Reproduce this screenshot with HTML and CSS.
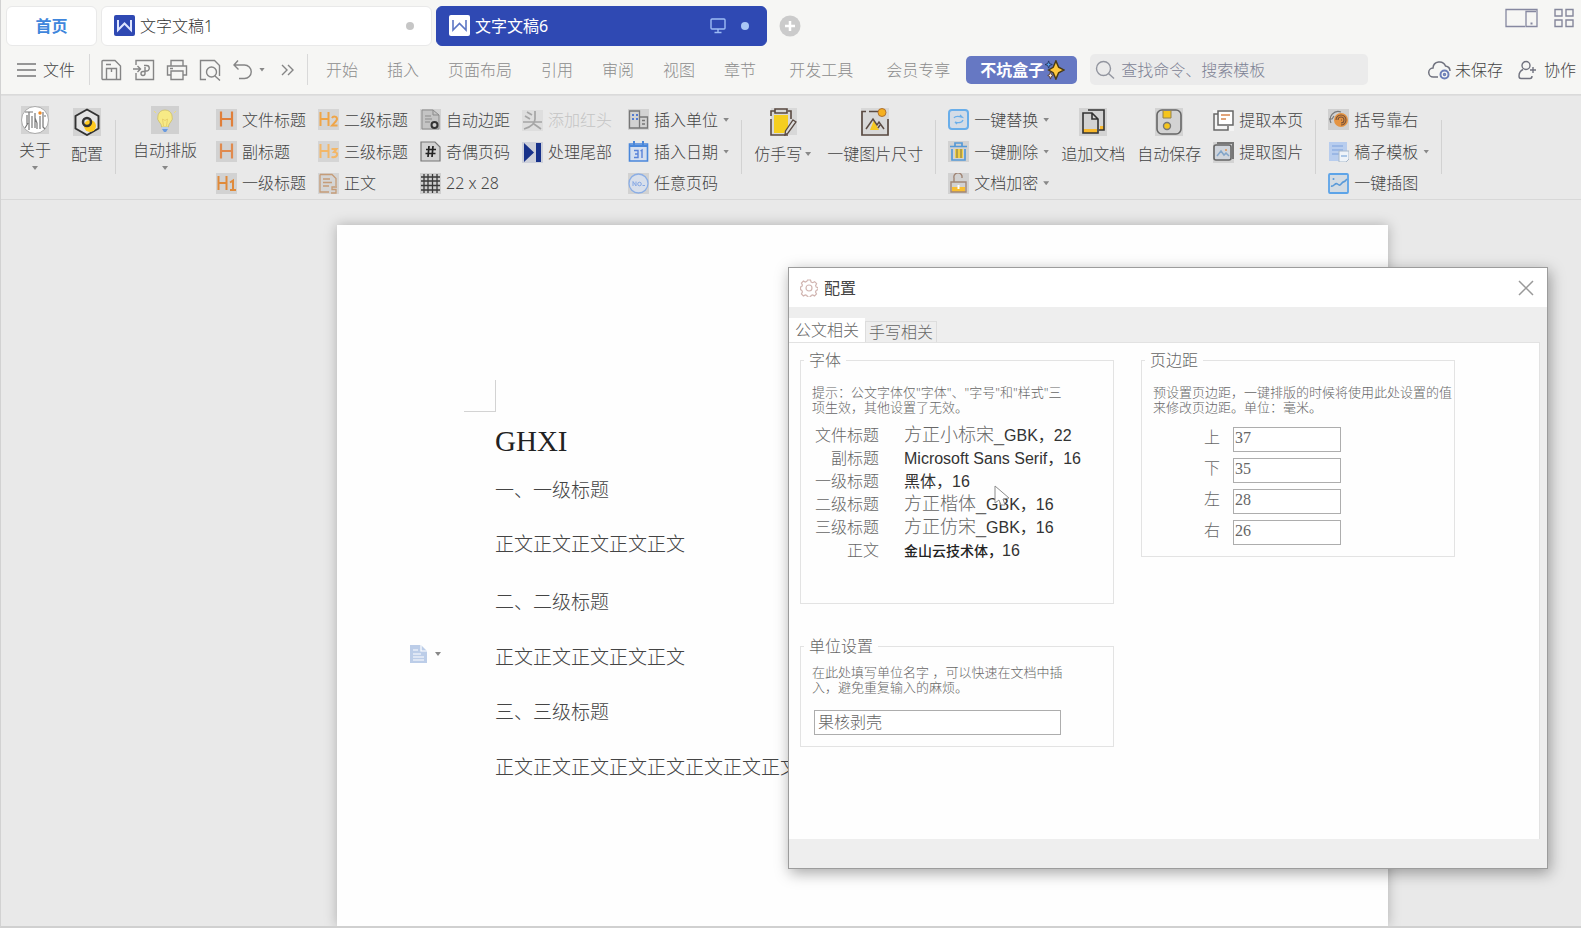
FILE: index.html
```html
<!DOCTYPE html>
<html lang="zh-CN">
<head>
<meta charset="utf-8">
<title>文字文稿6</title>
<link rel="stylesheet" href="styles.css">
</head>
<body>
<div class="app">
  <nav class="tabs" aria-label="文档标签">
    <button class="tab tab-home">首页</button>
    <button class="tab tab-doc">
      <svg class="doc-logo" viewBox="0 0 21 21"><rect width="21" height="21" rx="2" fill="#2f49b3"/><path d="M4 5v10l6.500-6.500L17 15V5" fill="none" stroke="#dfe6ff" stroke-width="2"/></svg>
      <span class="tab-name">文字文稿1</span>
      <span class="dot"></span>
    </button>
    <button class="tab tab-doc tab-active">
      <svg class="doc-logo" viewBox="0 0 21 21"><rect width="21" height="21" rx="2" fill="#fff"/><path d="M4 5v10l6.500-6.500L17 15V5" fill="none" stroke="#5c76c4" stroke-width="1.600"/></svg>
      <span class="tab-name">文字文稿6</span>
      <svg class="monitor" viewBox="0 0 16 16" fill="none" stroke="#9dbcf5" stroke-width="1.400"><rect x="1" y="1" width="14" height="10" rx="1"/><path d="M8 11v3M4.500 14.500h7"/></svg>
      <span class="dot"></span>
    </button>
    <button class="tab-add" aria-label="新建"><svg viewBox="0 0 22 22"><circle cx="11" cy="11" r="10.500" fill="#cbcbcb"/><path d="M11 6v10M6 11h10" stroke="#fff" stroke-width="2.500"/></svg></button>
    <div class="window-tools">
      <svg width="33" height="20" viewBox="0 0 33 20" fill="none" stroke="#8688a0" stroke-width="1.300"><path d="M20 18.500H1V1.500h31v17H21v-15h10"/><path d="M25.500 15.500h2" stroke-width="2"/></svg>
      <svg width="20" height="20" viewBox="0 0 20 20" fill="none" stroke="#85879b" stroke-width="1.400"><path d="M1 1.500h7v6.500H1zM12 1.500h7v6.500h-7zM1 12h7v6.500H1zM12 12h7v6.500h-7z"/></svg>
    </div>
  </nav>

  <div class="menubar">
    <button class="file-btn"><svg width="20" height="16" viewBox="0 0 20 16" stroke="#777" stroke-width="1.400"><path d="M0 2h19M0 8h19M0 14h19"/></svg>文件</button>
    <span class="rule"></span>
    <div class="quick">
      <button aria-label="保存"><svg viewBox="0 0 22 22"><path d="M3 1.500h12l5.500 5.500v13.500h-17.500a1 1 0 0 1-1-1v-17a1 1 0 0 1 1-1z"/><path d="M6.500 20.500V9.500h10v11M6 5.500h5M11.500 9.500V13"/></svg></button>
      <button aria-label="输出为PDF"><svg viewBox="0 0 22 22"><path d="M3 6V1.500h17.500v19H3V14M0 10h7M4.500 7l3 3-3 3"/><path d="M11 6.500h2.500a2.700 2.700 0 0 1 0 5.500H12v2.500a2 2 0 1 1-2-2h2V8"/></svg></button>
      <button aria-label="打印"><svg viewBox="0 0 22 22"><path d="M5 7V1.500h12V7M5 16H1.500V7h19v9H17"/><path d="M5 12h12v8.500H5zM4 9.500h3"/></svg></button>
      <button aria-label="打印预览"><svg viewBox="0 0 22 22"><path d="M7 20.500H1.500v-19h14l5 5V17"/><circle cx="12.500" cy="13" r="5"/><path d="M16 17l5 4.500"/></svg></button>
      <button aria-label="撤销"><svg viewBox="0 0 22 22"><path d="M6 1.500L2 6l4.500 4.500M2 6h10.500a6.500 6.500 0 0 1 0 13.500H7"/></svg></button>
      <span class="caret"></span>
      <button class="more" aria-label="更多"><svg viewBox="0 0 22 22"><path d="M6 6l5 5-5 5M12 6l5 5-5 5"/></svg></button>
    </div>
    <span class="rule"></span>
    <div class="menus">
      <button>开始</button><button>插入</button><button>页面布局</button><button>引用</button><button>审阅</button><button>视图</button><button>章节</button><button class="wide">开发工具</button><button class="wide">会员专享</button>
    </div>
    <button class="pill">不坑盒子<svg width="20" height="20" viewBox="0 0 22 22"><path d="M12 1l3 7 6 3-6 3-3 7-3-7-5-3 5-3z" fill="#ffc83d" stroke="#4a3b17" stroke-width="1.600"/><path d="M4 1l1 3 3 1-3 1-1 3-1-3-3-1 3-1z" fill="#5aa3f0" stroke="#24365e"/><path d="M6 13l1 3 2 1-2 1-1 3-1-3-2-1 2-1z" fill="#fff3e0" stroke="#5b3a2b"/></svg></button>
    <label class="search"><svg width="20" height="20" viewBox="0 0 20 20" fill="none" stroke="#92959f" stroke-width="1.400"><circle cx="8.500" cy="8.500" r="7"/><path d="M13.500 13.500l5.500 5"/></svg><input type="text" placeholder="查找命令、搜索模板" aria-label="查找命令"></label>
    <div class="account">
      <button><svg width="23" height="20" viewBox="0 0 23 20" fill="none" stroke="#70727e" stroke-width="1.500"><path d="M10 17H5.500a4.500 4.500 0 0 1-.5-9A6.500 6.500 0 0 1 17.500 6c3 .5 4.500 2.500 4.500 5"/><circle cx="16.500" cy="14.500" r="4" stroke="#6c7eb8" stroke-width="2"/><circle cx="16.500" cy="14.500" r="1" stroke="#6c7eb8"/></svg>未保存</button>
      <button><svg width="19" height="20" viewBox="0 0 19 20" fill="none" stroke="#70727e" stroke-width="1.400"><circle cx="8" cy="5.500" r="4"/><path d="M5 9.500c-3 1.500-4 4-4 6.500 0 1.500.5 2.500 2 2.500h9c1.500 0 2-1 2-2.500M12 10h6M15 7v6"/></svg>协作</button>
    </div>
  </div>

  <div class="ribbon">
    <button class="big high">
      <svg viewBox="0 0 28 28"><rect width="28" height="28" fill="#d3d3d3"/><circle cx="14" cy="14" r="13.500" fill="#fff" stroke="#999" stroke-width=".8"/><path d="M4 6h8M8 6v18M6 9v10M11 10v12M4 22l3-5M14 7v15M14 12l2 5v6M19 10v13M22 6v15l2 2M23 10h2" fill="none" stroke="#777" stroke-width="1.200"/><circle cx="19" cy="7" r="1.700" fill="#f08a24"/></svg>
      <span>关于</span><i class="caret"></i>
    </button>
    <button class="big apart">
      <svg viewBox="0 0 28 28"><rect width="28" height="28" fill="#d3d3d3"/><path d="M14 1.500L25.500 8v12.500L14 27 2.500 20.500V8z" fill="#e4e4e4" stroke="#333" stroke-width="1.900"/><circle cx="17" cy="18" r="6" fill="#ffca1f"/><circle cx="14" cy="14" r="4" fill="none" stroke="#333" stroke-width="2.500"/></svg>
      <span>配置</span>
    </button>
    <span class="divider"></span>
    <button class="big high shift">
      <svg viewBox="0 0 28 28"><rect width="28" height="28" fill="#d0d0d0"/><path d="M14 4a7.500 7.500 0 0 0-5 13c1 1 1.500 2.500 1.500 4h7c0-1.500.5-3 1.500-4a7.500 7.500 0 0 0-5-13z" fill="#f7ea86" stroke="#c5b765" stroke-width=".7"/><path d="M12.500 20l-1-7 2.500 1.500 2.500-1.500-1 7" fill="none" stroke="#e3c964" stroke-width=".8"/><path d="M11 21h6v2h-6z" fill="#b9cde9"/><path d="M11 23h6l-2 3h-2z" fill="#6a9be0"/><path d="M3 5l2 2M25 5l-2 2" stroke="#eedc7a"/></svg>
      <span>自动排版</span><i class="caret"></i>
    </button>
    <div class="stack after-layout">
      <button><svg viewBox="0 0 21 21"><rect width="21" height="21" fill="#d2d2d2"/><path d="M5 2.500v15M16 2.500v15M5 10h11" stroke="#e07f3a" stroke-width="2.200"/></svg>文件标题</button>
      <button><svg viewBox="0 0 21 21"><rect width="21" height="21" fill="#d2d2d2"/><path d="M5 2.500v15M16 2.500v15M5 10h11" stroke="#e08a4e" stroke-width="2.200"/></svg>副标题</button>
      <button><svg viewBox="0 0 21 21"><rect width="21" height="21" fill="#d2d2d2"/><path d="M2.500 3v14M10.500 3v14M2.500 10h8M14 9.500l3-2V17M14 17h6" fill="none" stroke="#e08a3a" stroke-width="2"/></svg>一级标题</button>
    </div>
    <div class="stack">
      <button><svg viewBox="0 0 21 21"><rect width="21" height="21" fill="#d5d5d5"/><path d="M2.500 3v14M10.500 3v14M2.500 10h8M14 9c1-2 5-2 5 1 0 2-3 4-5 6.500h5.500" fill="none" stroke="#efa548" stroke-width="2"/></svg>二级标题</button>
      <button><svg viewBox="0 0 21 21"><rect width="21" height="21" fill="#d5d5d5"/><path d="M2.500 3v14M10.500 3v14M2.500 10h8M13.500 8h5L16 11c5 0 4 6-2.500 5" fill="none" stroke="#f3b768" stroke-width="2"/></svg>三级标题</button>
      <button><svg viewBox="0 0 21 21"><rect width="21" height="21" fill="#d5d5d5"/><path d="M2 1.500h12l4 4V13M2 1.500v17.500h9M5 6h7M5 9.500h9M5 13h6M19 14h-5v2.500h4V20h-5" fill="none" stroke="#c59c78" stroke-width="1.300"/></svg>正文</button>
    </div>
    <div class="stack">
      <button><svg viewBox="0 0 21 21"><rect width="21" height="21" fill="#d2d2d2"/><path d="M2 1h11l6 5v14H2z" fill="#c4c4c4" stroke="#8b8b8b"/><path d="M13 1v5h6M5 7h6M5 10h7M5 13h5" fill="none" stroke="#8b8b8b"/><circle cx="14.500" cy="16" r="3" fill="#ccc" stroke="#333" stroke-width="2"/></svg>自动边距</button>
      <button><svg viewBox="0 0 21 21"><path d="M1 1h14l5 5v14H1z" fill="#d2d2d2" stroke="#777" stroke-width="1.200"/><path d="M9 5L8 16M13 5l-1 11M6 8.500h10M5.500 12.500h10" stroke="#222" stroke-width="1.700"/></svg>奇偶页码</button>
      <button><svg viewBox="0 0 21 21"><rect width="21" height="21" fill="#cfcfcf"/><path d="M4 1v19M8 1v19M12.500 1v19M17 1v19M1 4h19M1 8h19M1 12.500h19M1 17h19" stroke="#3a3a3a" stroke-width="1.300"/></svg>22 x 28</button>
    </div>
    <div class="stack">
      <button class="disabled" disabled><svg viewBox="0 0 21 21"><rect width="21" height="21" fill="#dedede"/><path d="M5 2l5 3M3 6l5 3M1 12h19M13 1v8c0 5-4 8-11 10M12 14l7 5" fill="none" stroke="#a5a5a5" stroke-width="1.700"/></svg>添加红头</button>
      <button><svg viewBox="0 0 21 21"><rect width="21" height="21" fill="#cdd0da"/><path d="M2 1l10 9.500L2 20zM14 1h5v19h-5z" fill="#17318a"/></svg>处理尾部</button>
    </div>
    <div class="stack insert">
      <button><svg viewBox="0 0 21 21"><rect width="21" height="21" fill="#d2d2d2"/><path d="M1.500 2h10v17h-10zM11.500 8h8v11h-8zM14 11.500h3M14 15h3" fill="none" stroke="#777" stroke-width="1.300"/><path d="M4 6h2M8 6h2M4 10h2M8 10h2" stroke="#537bd0" stroke-width="2"/></svg>插入单位<i class="caret"></i></button>
      <button><svg viewBox="0 0 21 21"><path d="M1.500 3h18v17h-18z" fill="#d5dff0" stroke="#4a87da" stroke-width="1.600"/><path d="M1.500 5h18M6 0v5M15 0v5" stroke="#4a87da" stroke-width="2"/><path d="M6 9.500h4v7H6M7 13h3M12.500 10l1.500-1V17" fill="none" stroke="#5a83d8" stroke-width="1.400"/></svg>插入日期<i class="caret"></i></button>
      <button><svg viewBox="0 0 21 21"><rect width="21" height="21" fill="#d2d2d2"/><circle cx="10.500" cy="10.500" r="9.500" fill="#d8dfeb" stroke="#8baee5" stroke-width="1.300"/><path d="M5 13V8.500L8 13V8.500" fill="none" stroke="#86a8e4"/><circle cx="11.500" cy="11" r="1.800" fill="none" stroke="#86a8e4"/><path d="M14.500 12.500H17" stroke="#86a8e4"/></svg>任意页码</button>
    </div>
    <span class="divider"></span>
    <button class="big">
      <svg viewBox="0 0 28 28"><rect x="2" width="26" height="27" fill="#d8d8d8"/><path d="M5 7h14v14l-4 4H5z" fill="#f5ce20"/><path d="M6 3H2v5M2 11v16h17M19 3h3v8M6 1h12v4H6z" fill="none" stroke="#5a4a42" stroke-width="1.600"/><path d="M24 12l3 2-8 11-3 2 .5-4z" fill="#ddd" stroke="#5a4a42" stroke-width="1.300"/></svg>
      <span>仿手写<i class="caret"></i></span>
    </button>
    <button class="big picture">
      <svg viewBox="0 0 28 28"><rect width="28" height="28" fill="#d8d8d8"/><path d="M17 3.500H8M5 3.500H1V27h26V11" fill="none" stroke="#5a4a42" stroke-width="1.700"/><circle cx="21" cy="4.500" r="4" fill="#f5b020" stroke="#b07030"/><path d="M9 22l4-10 5 10z" fill="#f5c820"/><path d="M5 21l7-10 4 6 2-3 5 7M17 20l2-3" fill="none" stroke="#5a4a42" stroke-width="1.500"/></svg>
      <span>一键图片尺寸</span>
    </button>
    <span class="divider"></span>
    <div class="stack">
      <button><svg viewBox="0 0 21 21"><rect x="1" y="1" width="19" height="19" rx="3" fill="#d4dce6" stroke="#69aeea" stroke-width="2"/><path d="M6 9c1-2 4-2 8-1l-2-2M15 11c-1 3-5 3-8 2l2 2" fill="none" stroke="#69aeea" stroke-width="1.300"/></svg>一键替换<i class="caret"></i></button>
      <button><svg viewBox="0 0 21 21"><rect width="21" height="21" fill="#d2d2d2"/><path d="M2 5.500h17M7 5V2h7v3M4 8v11h13V8" fill="none" stroke="#5599d6" stroke-width="1.700"/><path d="M7 8h8v9H7z" fill="#efce45"/><path d="M9 8v9M13 8v9" stroke="#78704d"/></svg>一键删除<i class="caret"></i></button>
      <button><svg viewBox="0 0 21 21"><rect width="21" height="21" fill="#d2d2d2"/><path d="M4 14h13v5H4z" fill="#f8be32"/><path d="M3 9h15v10H3zM6 9V5a4 4 0 0 1 8-2v2" fill="none" stroke="#a18676" stroke-width="1.400"/><path d="M10.500 12v4" stroke="#fff" stroke-width="2"/></svg>文档加密<i class="caret"></i></button>
    </div>
    <button class="big">
      <svg viewBox="0 0 28 28"><rect width="28" height="28" fill="#d3d3d3"/><path d="M4 21h14v4H4zM21 18h4v4h-4z" fill="#f8b82c"/><path d="M4 5h9l6 6v14H4zM13 5v6h6M9 2h16v20h-5" fill="none" stroke="#333" stroke-width="1.600"/></svg>
      <span>追加文档</span>
    </button>
    <button class="big">
      <svg viewBox="0 0 28 28"><rect width="28" height="28" fill="#d3d3d3"/><rect x="2" y="2" width="24" height="24" rx="5" fill="none" stroke="#666" stroke-width="1.600"/><path d="M8 3h8v7H8z" fill="#f5c51c"/><path d="M8 2v8h8V2" fill="none" stroke="#94824e"/><circle cx="12" cy="18" r="3.500" fill="#f5c51c" stroke="#777" stroke-width="1.400"/></svg>
      <span>自动保存</span>
    </button>
    <div class="stack">
      <button><svg viewBox="0 0 21 21"><rect width="21" height="21" fill="#f4f4f4"/><path d="M5 4H1v16h14v-4" fill="none" stroke="#666" stroke-width="1.500"/><path d="M5 1h15v14H5z" fill="#fff" stroke="#666" stroke-width="1.500"/><path d="M8 5h9M8 9h5" stroke="#d7874f" stroke-width="1.700"/></svg>提取本页</button>
      <button><svg viewBox="0 0 21 21"><rect width="21" height="21" fill="#d3d3d3"/><path d="M4 1h16v16" fill="none" stroke="#777" stroke-width="2"/><rect x="1" y="3" width="17" height="15" rx="2" fill="#d0d5dc" stroke="#666" stroke-width="1.600"/><path d="M4 14l4-5 3 4 2-2 3 3" fill="none" stroke="#83a5c8" stroke-width="1.500"/><circle cx="13" cy="8" r="1" fill="#df9353"/></svg>提取图片</button>
    </div>
    <span class="divider"></span>
    <div class="stack">
      <button><svg viewBox="0 0 21 21"><rect width="21" height="21" fill="#d0d0d0"/><path d="M3 14A8 8 0 0 1 13 3M1 10h3l2-3" fill="none" stroke="#777" stroke-width="1.200"/><circle cx="13" cy="11" r="7" fill="#e59442"/><path d="M8 11a5 5 0 1 1 5 5M10 11a3 3 0 1 1 3 3M13 11h1" fill="none" stroke="#76513a" stroke-width="1.100"/></svg>括号靠右</button>
      <button><svg viewBox="0 0 21 21"><path d="M1 1h18v19H1z" fill="#b8cdee"/><path d="M4 5h11M4 9h11M4 13h7" stroke="#7da2dc" stroke-width="1.200"/><path d="M11 10h10v8l-3 3h-7z" fill="#eef3f8" stroke="#a8b8ca"/><path d="M13 15h6" stroke="#699bd5"/></svg>稿子模板<i class="caret"></i></button>
      <button><svg viewBox="0 0 21 21"><rect x="1" y="1" width="19" height="19" rx="1" fill="#d3dbe3" stroke="#5da4e8" stroke-width="1.800"/><path d="M3 13c3 1 4-4 6.500-2s3 1 4.500-1 2 0 5-4" fill="none" stroke="#5899d8" stroke-width="1.600"/><circle cx="5.500" cy="6" r="1" fill="#5899d8"/></svg>一键插图</button>
    </div>
    <span class="divider"></span>
  </div>

  <main class="workspace">
    <article class="page">
      <span class="crop"></span>
      <h1>GHXI</h1>
      <h2>一、一级标题</h2>
      <p>正文正文正文正文正文</p>
      <h2>二、二级标题</h2>
      <p>正文正文正文正文正文</p>
      <h2>三、三级标题</h2>
      <p>正文正文正文正文正文正文正文正文</p>
      <button class="para-tool" aria-label="段落布局"><svg width="17" height="18" viewBox="0 0 17 18"><path d="M0 0h11l6 6v12H0z" fill="#bccde8"/><path d="M11 0v6h6M3 5h5M3 9h8M3 12h11M3 15h11" fill="none" stroke="#fff" stroke-width="1.200"/></svg><i class="caret"></i></button>
    </article>
  </main>
</div>

<section class="dialog" role="dialog" aria-labelledby="dialog-title">
  <header class="dialog-head">
    <svg width="18" height="18" viewBox="0 0 18 18" fill="none" stroke="#d1b5b1" stroke-width="1.200"><path d="M7.500 1h3l.6 2 1.600.7 1.900-1 2 2-1 1.900.6 1.500 1.800.5v2l-1.800.8-.7 1.500 1 2-2 2-1.900-1-1.500.6-.6 1.500h-3l-.6-1.500-1.500-.6-2 1-2-2 1-2-.6-1.500L.500 10.600V8l1.300-.5.600-1.500-1-1.900 2-2 1.900 1 1.500-.7z"/><circle cx="9" cy="9" r="3"/></svg>
    <h2 id="dialog-title">配置</h2>
    <button class="close" aria-label="关闭"><svg width="16" height="16" viewBox="0 0 16 16" stroke="#999" stroke-width="1.500"><path d="M1 1l14 14M15 1L1 15"/></svg></button>
  </header>
  <div class="dialog-tabs" role="tablist">
    <button role="tab" aria-selected="true" class="selected">公文相关</button>
    <button role="tab" aria-selected="false">手写相关</button>
  </div>
  <div class="panel">
    <div class="column">
      <fieldset class="fonts">
        <legend>字体</legend>
        <div class="body">
          <p class="hint">提示：公文字体仅"字体"、"字号"和"样式"三<br>项生效，其他设置了无效。</p>
          <dl>
            <dt>文件标题</dt><dd><span class="name-wide">方正小标宋_</span>GBK，22</dd>
            <dt>副标题</dt><dd>Microsoft Sans Serif，16</dd>
            <dt>一级标题</dt><dd>黑体，16</dd>
            <dt>二级标题</dt><dd><span class="name-wide">方正楷体_</span>GBK，16</dd>
            <dt>三级标题</dt><dd><span class="name-wide">方正仿宋_</span>GBK，16</dd>
            <dt>正文</dt><dd><span class="name-narrow">金山云技术体，</span>16</dd>
          </dl>
        </div>
      </fieldset>
      <fieldset class="unit">
        <legend>单位设置</legend>
        <div class="body">
          <p class="hint">在此处填写单位名字 ，可以快速在文档中插<br>入，避免重复输入的麻烦。</p>
          <input type="text" value="果核剥壳" aria-label="单位名字">
        </div>
      </fieldset>
    </div>
    <div class="column">
      <fieldset class="margins">
        <legend>页边距</legend>
        <div class="body">
          <p class="hint">预设置页边距，一键排版的时候将使用此处设置的值<br>来修改页边距。单位：毫米。</p>
          <div class="fields">
            <label for="m-top">上</label><input id="m-top" type="text" value="37">
            <label for="m-bottom">下</label><input id="m-bottom" type="text" value="35">
            <label for="m-left">左</label><input id="m-left" type="text" value="28">
            <label for="m-right">右</label><input id="m-right" type="text" value="26">
          </div>
        </div>
      </fieldset>
    </div>
  </div>
  <svg class="pointer" width="16" height="23" viewBox="0 0 16 23"><path d="M1 1v17l4-3 2 5h4l-2-6 6-1z" fill="#fff" stroke="#8c8c8c"/></svg>
</section>
</body>
</html>
```
FILE: styles.css
```css
* { box-sizing: border-box; }

body {
  margin: 0;
  font: 300 16px/24px "Noto Sans", "Noto Sans CJK SC", sans-serif;
  color: #444;
  background: #e9e9e9;
}

h1, h2, p, dl, dd { margin: 0; font-size: inherit; font-weight: inherit; }

button {
  margin: 0;
  padding: 0;
  border: 0;
  background: none;
  font: inherit;
  color: inherit;
  white-space: nowrap;
}

input {
  margin: 0;
  font: inherit;
  color: inherit;
  border-radius: 0;
}

svg { display: block; flex: none; }

.app {
  display: flex;
  flex-direction: column;
  min-height: 100vh;
  border-left: 1px solid #d2d2d2;
  border-bottom: 2px solid #d0d0d0;
}

.caret {
  flex: none;
  width: 6px;
  height: 4px;
  background: #888;
  clip-path: polygon(0 0, 100% 0, 50% 100%);
}

/* Document tabs */
.tabs {
  display: flex;
  align-items: center;
  gap: 4px;
  height: 49px;
  padding: 2px 7px 0 5px;
  background: #f6f6f4;
}

.tab {
  height: 40px;
  border: 1px solid #e9e9e9;
  border-radius: 6px;
  background: #fff;
}

.tab-home {
  width: 91px;
  font-weight: 700;
  color: #3f86dc;
}

.tab-doc {
  display: flex;
  align-items: center;
  gap: 5px;
  flex: 0 1 331px;
  padding: 0 17px 0 12px;
  color: #333;
}

.doc-logo { width: 21px; height: 21px; }

.tab-name { flex: 1; text-align: left; }

.tab-active {
  border-color: #2f49b3;
  background: #2f49b3;
  color: #fff;
  font-weight: 400;
}

.dot {
  width: 8px;
  height: 8px;
  border-radius: 50%;
  background: #c6c6c6;
}

.tab-active .dot { margin-left: 10px; background: #a9c6f5; }

.monitor { width: 16px; height: 16px; }

.tab-add { margin-left: 8px; }
.tab-add svg { width: 22px; height: 22px; }

.window-tools {
  display: flex;
  align-self: flex-start;
  gap: 16px;
  margin: 6px 0 0 auto;
}

/* Menu bar */
.menubar {
  display: flex;
  align-items: center;
  height: 46px;
  padding: 0 5px 4px 16px;
  background: #f6f6f4;
  border-bottom: 1px solid #dadada;
}

.file-btn { display: flex; align-items: center; gap: 6px; }

.rule {
  flex: none;
  width: 1px;
  height: 31px;
  margin-left: 14px;
  background: #d9d9d9;
}

.quick {
  display: flex;
  align-items: center;
  gap: 11px;
  margin-left: 10px;
}

.quick svg {
  width: 22px;
  height: 22px;
  fill: none;
  stroke: #858585;
  stroke-width: 1.4;
}

.quick .caret { margin-left: -6px; }
.quick .more { margin-right: -5px; }

.menus {
  display: flex;
  gap: 29px;
  margin-left: 18px;
  color: #8c8c8c;
}

.menus .wide { margin-left: 4px; }

.pill {
  display: flex;
  align-items: center;
  gap: 1px;
  height: 28px;
  margin-left: 16px;
  padding: 0 12px 0 14px;
  border-radius: 5px;
  background: #6678c3;
  color: #fff;
  font-weight: 700;
}

.search {
  display: flex;
  align-items: center;
  gap: 6px;
  flex: 0 1 278px;
  height: 31px;
  margin-left: 13px;
  padding: 0 5px;
  border-radius: 5px;
  background: #ebebeb;
}

.search input {
  flex: 1;
  min-width: 0;
  padding: 0;
  border: 0;
  background: none;
}

.search input::placeholder { color: #7d8294; opacity: 1; }

.account {
  display: flex;
  gap: 15px;
  margin-left: auto;
}

.account button { display: flex; align-items: center; gap: 4px; }
.account button + button { gap: 7px; }

/* Ribbon */
.ribbon {
  display: flex;
  gap: 12px;
  height: 105px;
  padding: 8px 0 0 18px;
  border-top: 1px solid #dfdfdf;
  border-bottom: 1px solid #d8d8d8;
  background: #e9e9e9;
}

.divider {
  flex: none;
  width: 1px;
  height: 54px;
  margin-top: 16px;
  background: #d2d2d2;
}

.big {
  display: flex;
  flex-direction: column;
  align-items: center;
  align-self: flex-start;
  gap: 6px;
  padding-top: 4px;
}

.big svg { width: 28px; height: 28px; }

.big span { display: flex; align-items: center; gap: 3px; }

.big.high { gap: 4px; padding-top: 2px; }
.big.apart { margin-left: 8px; }
.big.shift { margin-left: 5px; margin-right: 1px; }
.big.picture { margin-left: 4px; }

.stack { display: flex; flex-direction: column; }
.stack.after-layout { margin-left: 6px; }
.stack.insert { margin-left: 4px; }

.stack button {
  display: flex;
  align-items: center;
  gap: 5px;
  height: 32px;
}

.stack svg { width: 21px; height: 21px; }

.disabled { color: #c4c4c4; }

/* Document */
.workspace {
  flex: 1;
  display: grid;
  grid-template-columns: 336fr 1051fr 193fr;
  padding-top: 25px;
  overflow: hidden;
}

.page {
  grid-column: 2;
  position: relative;
  padding: 155px 158px 0;
  background: #fefefe;
  box-shadow: 0 0 12px rgba(0, 0, 0, .25);
  font-size: 19px;
  line-height: 55px;
}

.crop {
  display: block;
  width: 32px;
  height: 32px;
  margin-left: -31px;
  border: solid #d3d3d3;
  border-width: 0 1px 1px 0;
}

.page h1 {
  margin-top: 3px;
  font: 400 29px/52px "Liberation Serif", serif;
  color: #222;
}

.page h1 + h2 { line-height: 46px; }
.page h1 + h2 + p { line-height: 62px; }

.para-tool {
  position: absolute;
  left: 73px;
  top: 420px;
  display: flex;
  align-items: center;
  gap: 8px;
}

/* Settings window */
.dialog {
  position: absolute;
  left: 788px;
  top: 267px;
  width: 760px;
  padding-bottom: 29px;
  border: 1px solid #9c9c9c;
  background: #eee;
  box-shadow: 2px 4px 14px rgba(0, 0, 0, .35);
  line-height: 20px;
  color: #666;
}

.dialog-head {
  display: flex;
  align-items: center;
  gap: 6px;
  height: 39px;
  padding: 0 13px 0 11px;
  background: #fff;
}

.dialog-head h2 { font-weight: 400; color: #444; }

.close { margin-left: auto; }

.dialog-tabs {
  display: flex;
  align-items: flex-end;
  height: 35px;
}

.dialog-tabs button {
  height: 21px;
  padding: 0 3px;
  border: 1px solid #ddd;
  border-bottom: 0;
}

.dialog-tabs .selected {
  height: 24px;
  padding: 0 5px 2px;
  border-color: #fff;
  background: #fff;
}

.panel {
  display: flex;
  gap: 27px;
  min-height: 497px;
  margin-right: 7px;
  padding: 7px 11px;
  border: solid #e2e2e2;
  border-width: 1px 1px 0 0;
  background: #fefefe;
}

.column {
  display: flex;
  flex-direction: column;
  gap: 32px;
  width: 314px;
}

fieldset {
  min-width: 0;
  margin: 0;
  padding: 0;
  border: 1px solid #e3e3e3;
}

legend { margin-left: 3px; padding: 0 5px; }

.body { padding: 15px 11px 11px; }

.fonts { min-height: 254px; }

.unit .body { padding-top: 9px; }

.hint {
  font-size: 13px;
  line-height: 15px;
  white-space: nowrap;
}

dl {
  display: grid;
  grid-template-columns: 67px 1fr;
  column-gap: 25px;
  margin-top: 9px;
  line-height: 23px;
}

dt { text-align: right; }

dd {
  font-family: "Liberation Sans", "Noto Sans CJK SC", sans-serif;
  font-weight: 400;
  color: #333;
  white-space: nowrap;
}

.name-wide { font-size: 18px; font-weight: 300; color: #666; }
.name-narrow { font-size: 14px; font-weight: 500; color: #222; }

.dialog input {
  height: 25px;
  padding: 0 1px 3px;
  border: 1px solid #adadad;
  background: #fff;
  font-family: "Liberation Serif", "Noto Sans CJK SC", serif;
}

.fields {
  display: grid;
  grid-template-columns: 67px 108px;
  gap: 6px 13px;
  margin-top: 12px;
}

.fields label { text-align: right; }

.unit input { width: 247px; margin: 15px 0 0 2px; padding-left: 3px; }

.pointer {
  position: absolute;
  left: 205px;
  top: 217px;
}
```
